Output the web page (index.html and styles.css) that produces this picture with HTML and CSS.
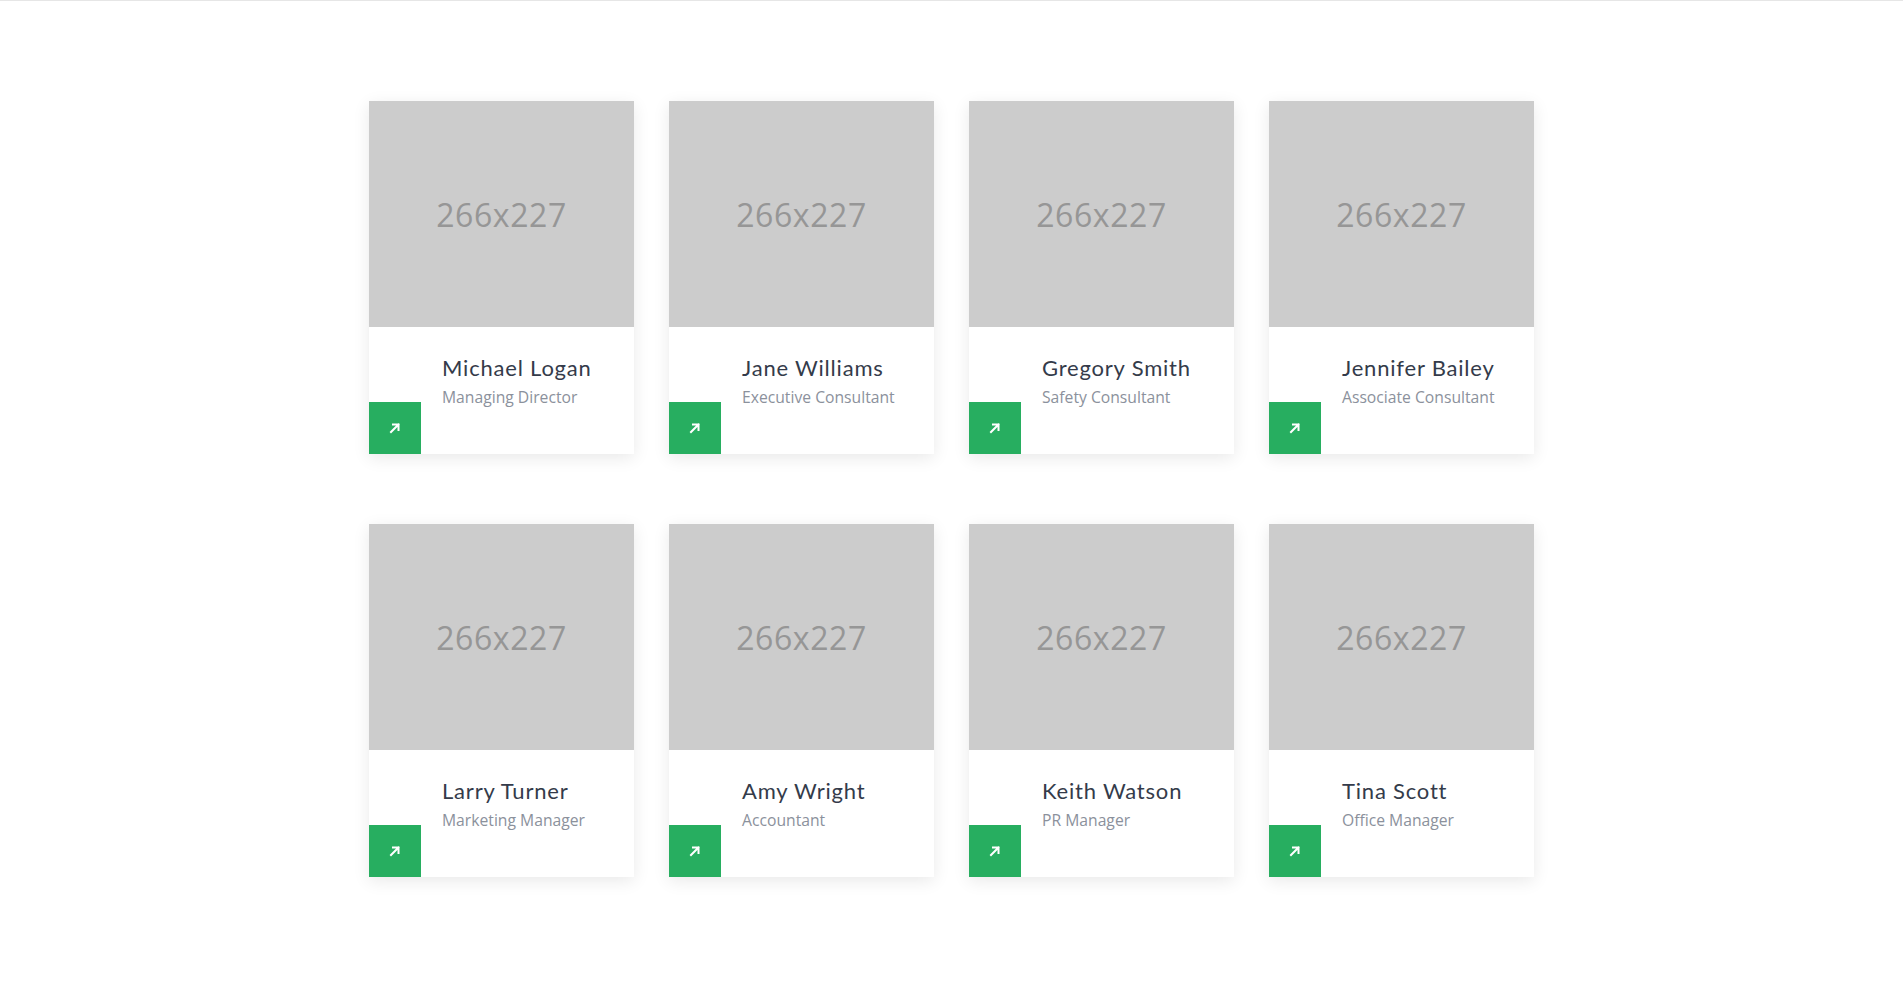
FILE: index.html
```html
<!DOCTYPE html>
<html lang="en">
<head>
<meta charset="utf-8">
<title>Team</title>
<link rel="stylesheet" href="styles.css">
</head>
<body>
<div class="topline"></div>
<section class="team">
  <div class="grid">
    <div class="card">
      <div class="photo">266x227</div>
      <div class="body">
        <a class="link" href="#"><svg viewBox="0 0 12 12" width="12" height="12"><path d="M2 10 L9.5 2.5 M4 2.5 H9.5 V8" fill="none" stroke="#fff" stroke-width="2" stroke-linecap="square"/></svg></a>
        <div class="info"><div class="name">Michael Logan</div><div class="role">Managing Director</div></div>
      </div>
    </div>
    <div class="card">
      <div class="photo">266x227</div>
      <div class="body">
        <a class="link" href="#"><svg viewBox="0 0 12 12" width="12" height="12"><path d="M2 10 L9.5 2.5 M4 2.5 H9.5 V8" fill="none" stroke="#fff" stroke-width="2" stroke-linecap="square"/></svg></a>
        <div class="info"><div class="name">Jane Williams</div><div class="role">Executive Consultant</div></div>
      </div>
    </div>
    <div class="card">
      <div class="photo">266x227</div>
      <div class="body">
        <a class="link" href="#"><svg viewBox="0 0 12 12" width="12" height="12"><path d="M2 10 L9.5 2.5 M4 2.5 H9.5 V8" fill="none" stroke="#fff" stroke-width="2" stroke-linecap="square"/></svg></a>
        <div class="info"><div class="name">Gregory Smith</div><div class="role">Safety Consultant</div></div>
      </div>
    </div>
    <div class="card">
      <div class="photo">266x227</div>
      <div class="body">
        <a class="link" href="#"><svg viewBox="0 0 12 12" width="12" height="12"><path d="M2 10 L9.5 2.5 M4 2.5 H9.5 V8" fill="none" stroke="#fff" stroke-width="2" stroke-linecap="square"/></svg></a>
        <div class="info"><div class="name">Jennifer Bailey</div><div class="role">Associate Consultant</div></div>
      </div>
    </div>
    <div class="card">
      <div class="photo">266x227</div>
      <div class="body">
        <a class="link" href="#"><svg viewBox="0 0 12 12" width="12" height="12"><path d="M2 10 L9.5 2.5 M4 2.5 H9.5 V8" fill="none" stroke="#fff" stroke-width="2" stroke-linecap="square"/></svg></a>
        <div class="info"><div class="name">Larry Turner</div><div class="role">Marketing Manager</div></div>
      </div>
    </div>
    <div class="card">
      <div class="photo">266x227</div>
      <div class="body">
        <a class="link" href="#"><svg viewBox="0 0 12 12" width="12" height="12"><path d="M2 10 L9.5 2.5 M4 2.5 H9.5 V8" fill="none" stroke="#fff" stroke-width="2" stroke-linecap="square"/></svg></a>
        <div class="info"><div class="name">Amy Wright</div><div class="role">Accountant</div></div>
      </div>
    </div>
    <div class="card">
      <div class="photo">266x227</div>
      <div class="body">
        <a class="link" href="#"><svg viewBox="0 0 12 12" width="12" height="12"><path d="M2 10 L9.5 2.5 M4 2.5 H9.5 V8" fill="none" stroke="#fff" stroke-width="2" stroke-linecap="square"/></svg></a>
        <div class="info"><div class="name">Keith Watson</div><div class="role">PR Manager</div></div>
      </div>
    </div>
    <div class="card">
      <div class="photo">266x227</div>
      <div class="body">
        <a class="link" href="#"><svg viewBox="0 0 12 12" width="12" height="12"><path d="M2 10 L9.5 2.5 M4 2.5 H9.5 V8" fill="none" stroke="#fff" stroke-width="2" stroke-linecap="square"/></svg></a>
        <div class="info"><div class="name">Tina Scott</div><div class="role">Office Manager</div></div>
      </div>
    </div>
  </div>
</section>
</body>
</html>
```
FILE: styles.css
```css
* { box-sizing: border-box; }
html, body { margin: 0; padding: 0; background: #fff; }
body { font-family: "Open Sans", "Liberation Sans", sans-serif; min-height: 985px; }
.topline { height: 1px; background: #e6e6e6; }
.team { padding: 100px 0 108px; }
.grid {
  width: 1165px;
  margin: 0 auto;
  display: grid;
  grid-template-columns: repeat(4, 265px);
  column-gap: 35px;
  row-gap: 70px;
}
.card {
  background: #fff;
  box-shadow: 0 4px 16px rgba(0, 0, 0, 0.09);
}
.photo {
  height: 226px;
  background: #cccccc;
  color: #969696;
  font-family: "Open Sans", sans-serif;
  font-size: 32px;
  letter-spacing: 0.6px;
  display: flex;
  align-items: center;
  justify-content: center;
  padding-top: 1px;
}
.body {
  height: 127px;
  display: grid;
  grid-template-columns: 52px 1fr;
  column-gap: 21px;
}
.link {
  align-self: end;
  width: 52px;
  height: 52px;
  background: #27ae60;
  display: flex;
  align-items: center;
  justify-content: center;
}
.link svg { display: block; }
.info { padding-top: 28px; }
.name {
  font-family: Lato, "Noto Sans", sans-serif;
  font-size: 22px;
  line-height: 26px;
  color: #343b4a;
  letter-spacing: 0.8px;
}
.role {
  margin-top: 6px;
  font-family: "Open Sans", sans-serif;
  font-size: 15.7px;
  line-height: 20px;
  color: #8b919c;
}
```
